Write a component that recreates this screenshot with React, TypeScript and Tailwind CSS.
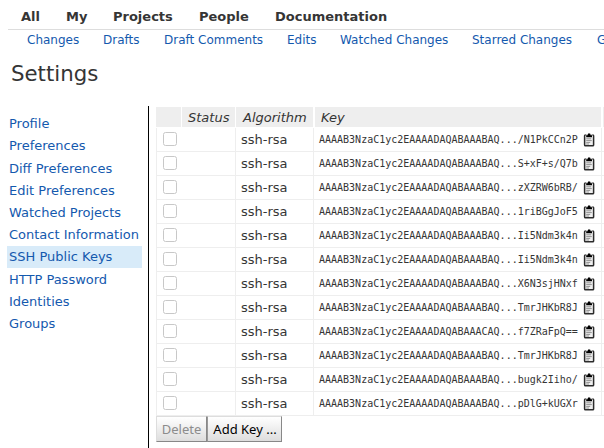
import React from "react";

const tabs = [
  { label: "All", w: "w-[45px]" },
  { label: "My", w: "w-[47px]" },
  { label: "Projects", w: "w-[86px]" },
  { label: "People", w: "w-[76px]" },
  { label: "Documentation", w: "w-[120px]" },
];

const links = [
  { label: "Changes", w: "w-[76px]" },
  { label: "Drafts", w: "w-[61px]" },
  { label: "Draft Comments", w: "w-[123px]" },
  { label: "Edits", w: "w-[53px]" },
  { label: "Watched Changes", w: "w-[132px]" },
  { label: "Starred Changes", w: "w-[125px]" },
  { label: "Groups", w: "w-[60px]" },
];

const sections = [
  "Profile",
  "Preferences",
  "Diff Preferences",
  "Edit Preferences",
  "Watched Projects",
  "Contact Information",
  "SSH Public Keys",
  "HTTP Password",
  "Identities",
  "Groups",
];

const keys = [
  "AAAAB3NzaC1yc2EAAAADAQABAAABAQ.../N1PkCCn2P",
  "AAAAB3NzaC1yc2EAAAADAQABAAABAQ...S+xF+s/Q7b",
  "AAAAB3NzaC1yc2EAAAADAQABAAABAQ...zXZRW6bRB/",
  "AAAAB3NzaC1yc2EAAAADAQABAAABAQ...1riBGgJoF5",
  "AAAAB3NzaC1yc2EAAAADAQABAAABAQ...Ii5Ndm3k4n",
  "AAAAB3NzaC1yc2EAAAADAQABAAABAQ...Ii5Ndm3k4n",
  "AAAAB3NzaC1yc2EAAAADAQABAAABAQ...X6N3sjHNxf",
  "AAAAB3NzaC1yc2EAAAADAQABAAABAQ...TmrJHKbR8J",
  "AAAAB3NzaC1yc2EAAAADAQABAAACAQ...f7ZRaFpQ==",
  "AAAAB3NzaC1yc2EAAAADAQABAAABAQ...TmrJHKbR8J",
  "AAAAB3NzaC1yc2EAAAADAQABAAABAQ...bugk2Iiho/",
  "AAAAB3NzaC1yc2EAAAADAQABAAABAQ...pDlG+kUGXr",
];

function Clipboard() {
  return (
    <svg width="12" height="14" viewBox="0 0 12 14" className="shrink-0">
      <rect x="1.6" y="2" width="9" height="10.8" rx="0.8" fill="#f0f0f0" stroke="#2c2c2c" strokeWidth="1.5" />
      <path d="M2.7 1H9.5V4.4H2.7Z" fill="#fff" fillOpacity=".7" />
      <path d="M3.2 4.2V2.3H4.6L5.1 .5H7.1L7.6 2.3H9V4.2Z" fill="#000" />
      <path d="M3.2 5.8H8.2M3.2 7.6H8.8M3.2 9.4H7.2M3.2 11H6" stroke="#888" strokeWidth="0.9" />
    </svg>
  );
}

function KeyRow({ value }: { value: string }) {
  return (
    <div className="flex h-6 border-b border-[#eee]">
      <div className="flex w-[79px] items-start border-l border-[#eee] pt-1 pl-1.5">
        <span className="h-3.5 w-3.5 rounded-[2.5px] border border-[#c8c8c8] bg-white" />
      </div>
      <div className="w-[78px] border-l border-[#eee] pl-[5px] text-[13px] leading-[23px]">ssh-rsa</div>
      <div className="flex w-[288px] items-start border-l border-[#eee] pl-[5px]">
        <span className="w-[264px] font-['DejaVu_Sans_Mono',monospace] text-[10px] leading-[23px]">{value}</span>
        <span className="pt-[5px]"><Clipboard /></span>
      </div>
      <div className="w-[3px] border-l border-[#eee]" />
    </div>
  );
}

export default function App() {
  return (
    <div className="h-[448px] w-[604px] overflow-hidden bg-white font-['DejaVu_Sans',sans-serif] text-[#353535]">
      <nav className="ml-2 flex h-[30px] border-b border-[#ddd] pt-[7px] pl-[13px] text-[13px] leading-5 font-bold whitespace-nowrap">
        {tabs.map((t) => (
          <span key={t.label} className={`${t.w} shrink-0`}>{t.label}</span>
        ))}
      </nav>
      <nav className="flex h-5 pl-[27px] text-[12px] leading-5 whitespace-nowrap text-[#1459ae]">
        {links.map((l) => (
          <a key={l.label} className={`${l.w} shrink-0`}>{l.label}</a>
        ))}
      </nav>
      <h1 className="h-14 pt-2 pl-[11px] text-[21.3px] leading-8">Settings</h1>
      <div className="flex h-[342px]">
        <aside className="w-[149px] shrink-0 border-r border-black pt-[7.2px] pr-1.5 pl-[7px] text-[13px] leading-[22.2px] whitespace-nowrap text-[#1459ae]">
          {sections.map((s) => (
            <a key={s} className={`mb-[0.2px] block h-[22px] pl-0.5 ${s === "SSH Public Keys" ? "bg-[#d8ebf9]" : ""}`}>{s}</a>
          ))}
        </aside>
        <main className="w-[455px] shrink-0 pt-px pl-[7px]">
          <div className="mb-px flex h-5 text-[13px] leading-[22px] italic">
            <div className="mr-px w-[25px] bg-[#eee]" />
            <div className="mr-px w-[53px] bg-[#eee] pl-1.5">Status</div>
            <div className="mr-0.5 w-[77px] bg-[#eee] pl-[7px]">Algorithm</div>
            <div className="mr-0.5 w-[286px] bg-[#eee] pl-1.5">Key</div>
            <div className="w-px bg-[#eee]" />
          </div>
          {keys.map((k, i) => (
            <KeyRow key={i} value={k} />
          ))}
          <div className="flex h-[26px] font-['Noto_Sans',sans-serif] text-[13px] leading-6">
            <button disabled className="w-[51px] border border-t-[#ddd] border-r-[#888] border-b-[#888] border-l-[#ddd] bg-linear-to-b from-white to-[#ddd] text-center leading-6 text-[#8c8c8c]">Delete</button>
            <button className="w-[75px] border border-t-[#ddd] border-r-[#888] border-b-[#888] border-l-[#999] bg-linear-to-b from-white to-[#ddd] pl-px text-center leading-6 whitespace-nowrap text-black">Add Key ...</button>
          </div>
        </main>
      </div>
    </div>
  );
}
